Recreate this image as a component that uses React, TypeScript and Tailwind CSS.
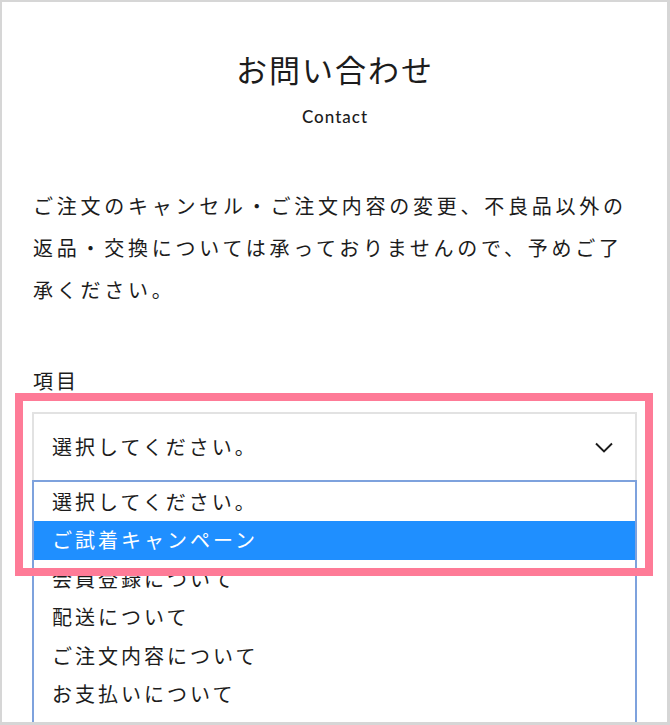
const jp = { fontFamily: '"Noto Sans CJK JP", "Noto Sans", sans-serif' };

const options = [
  "選択してください。",
  "ご試着キャンペーン",
  "会員登録について",
  "配送について",
  "ご注文内容について",
  "お支払いについて",
  "その他",
];

const ContactScreen = () => {
  return (
    <div
      className="relative w-[670px] h-[725px] overflow-hidden bg-white border-[#d6d6d6] border-t-2 border-l-2 border-r-[3px] border-b-[3px] text-[#1c1c1c]"
      style={jp}
    >
      <div className="pl-[31px] pr-[30px] pt-[47px]">
        <h1 className="text-center text-[31px] leading-[40px] tracking-[2px] font-normal">
          お問い合わせ
        </h1>
        <p
          className="mt-[18px] text-center text-[17px] leading-[20px] tracking-[1px] font-medium"
          style={{ fontFamily: "Lato, sans-serif" }}
        >
          Contact
        </p>

        <p className="mt-[58px] text-[20px] leading-[42px] tracking-[3.75px]">
          ご注文のキャンセル・ご注文内容の変更、不良品以外の返品・交換については承っておりませんので、予めご了承ください。
        </p>

        <label className="block mt-[55px] text-[20px] leading-[30px] tracking-[3px]">
          項目
        </label>

        <div className="mt-[16px] ml-[-1px]">
          <div className="flex h-[68px] items-center justify-between border-2 border-b-0 border-[#e2e2e2] pl-[18px] pr-[22px]">
            <span className="text-[20px] tracking-[3px]">選択してください。</span>
            <svg width="18" height="11" viewBox="0 0 18 11" fill="none">
              <path d="M1 1.5 L9 9.5 L17 1.5" stroke="#1c1c1c" strokeWidth="1.9" />
            </svg>
          </div>
          <ul className="border-2 border-b-0 border-[#7ea2dd]">
            {options.map((o, i) => (
              <li
                key={o}
                className={
                  (i === 0 ? "h-[39px] " : "h-[38.5px] ") +
                  "flex items-center pl-[18px] text-[20px] tracking-[3px] " +
                  (i === 1 ? "bg-[#1f8fff] text-white" : "text-[#1c1c1c]")
                }
              >
                {o}
              </li>
            ))}
          </ul>
        </div>
      </div>

      <div className="pointer-events-none absolute left-[13px] top-[391px] h-[183px] w-[638px] border-8 border-[#fe7b97]" />
    </div>
  );
};

export default function App() {
  return <ContactScreen />;
}
